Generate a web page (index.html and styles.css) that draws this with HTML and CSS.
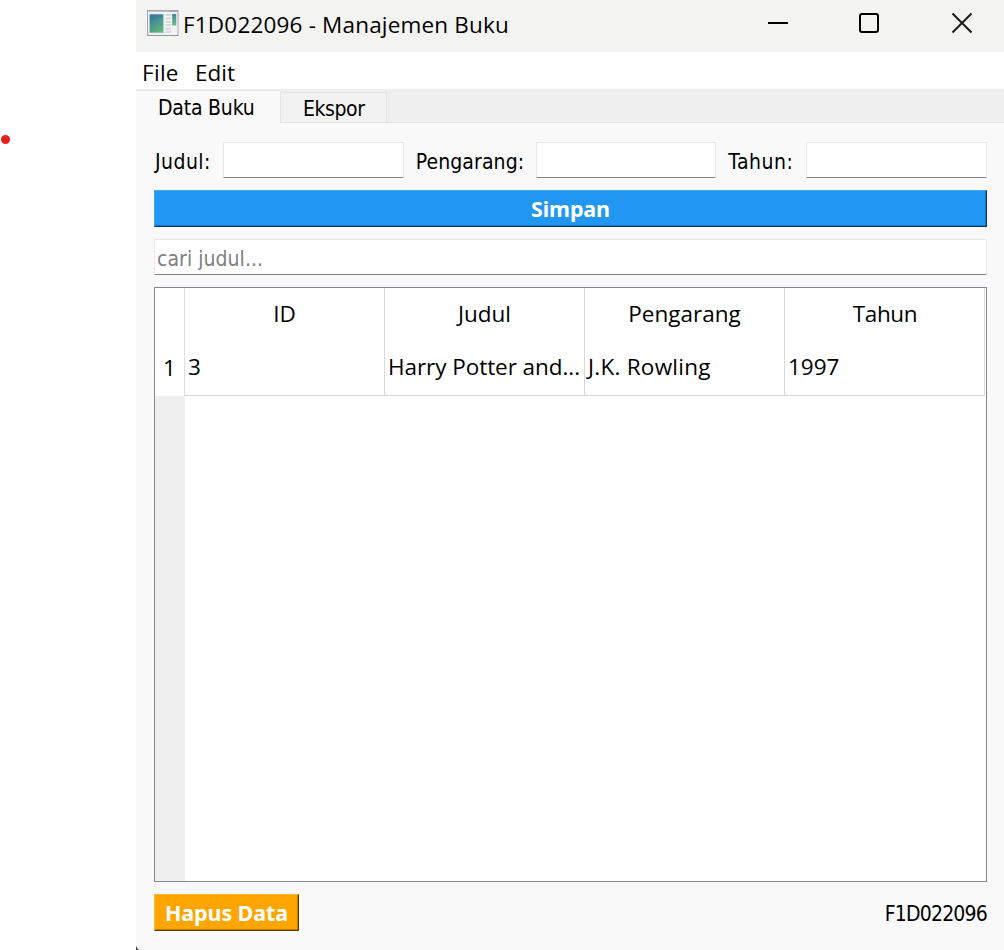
FILE: index.html
```html
<!DOCTYPE html>
<html lang="id">
<head>
<meta charset="utf-8">
<title>F1D022096 - Manajemen Buku</title>
<link rel="stylesheet" href="styles.css">
</head>
<body>
<aside class="margin"><span class="dot"></span></aside>
<main class="window">
  <header class="titlebar">
    <svg class="app-icon" width="32" height="27" viewBox="0 0 32 27">
      <defs>
        <linearGradient id="pane" x1="0" y1="0" x2=".6" y2="1"><stop offset="0" stop-color="#3a76a0"/><stop offset=".5" stop-color="#45948e"/><stop offset="1" stop-color="#62b478"/></linearGradient>
        <linearGradient id="bar" x1="0" y1="0" x2="0" y2="1"><stop offset="0" stop-color="#4085a8"/><stop offset="1" stop-color="#74bd78"/></linearGradient>
      </defs>
      <rect x=".5" y=".5" width="30.500" height="25" fill="#f1f2f4" stroke="#a3a8af"/>
      <path d="M1 1.500h30" stroke="#c1c6cc"/><path d="M22 1h9" stroke="#8f98a2"/>
      <path d="M0 25.500h31.500" stroke="#92979d"/>
      <rect x="2.200" y="4" width="14.600" height="19" fill="url(#pane)" stroke="#d9e4e8" stroke-width=".8"/>
      <path d="M3 10Q9 10 16 6V4.500H3z" fill="#3b709c" opacity=".4"/>
      <path d="M18.500 5h5.500M18.500 8.500h5.500M18.500 12h5.500M18.500 15h5.500M18.500 19h5.500M18.500 22h5.500" stroke="#cfd1d4" stroke-width="1.400"/>
      <rect x="25.200" y="4" width="4" height="11.500" fill="url(#bar)"/>
    </svg>
    <h1 class="title">F1D022096 - Manajemen Buku</h1>
    <svg class="controls" width="206" height="22" viewBox="0 0 206 22" fill="none" stroke="#000">
      <path d="M0 11h20" stroke-width="2"/>
      <rect x="92" y="2" width="18" height="18" rx="2" stroke-width="2"/>
      <path d="M184.500 1.500l19 19M203.500 1.500l-19 19" stroke="#1b1b1b" stroke-width="2"/>
    </svg>
  </header>
  <nav class="menu"><span class="menu-file">File</span><span class="menu-edit">Edit</span></nav>
  <nav class="tabs">
    <span class="tab tab-active">Data Buku</span>
    <span class="tab tab-idle">Ekspor</span>
    <span class="tab-rest"></span>
  </nav>
  <section class="panel">
    <div class="form">
      <label class="l-judul">Judul:</label><span class="input"></span>
      <label class="l-pengarang">Pengarang:</label><span class="input"></span>
      <label class="l-tahun">Tahun:</label><span class="input"></span>
    </div>
    <div class="button save"><span>Simpan</span></div>
    <div class="input search"><span>cari judul...</span></div>
    <div class="table">
      <div class="row head">
        <span class="num"></span><span class="cell">ID</span><span class="cell">Judul</span><span class="cell">Pengarang</span><span class="cell c-year">Tahun</span>
      </div>
      <div class="row data">
        <span class="num">1</span><span class="cell">3</span><span class="cell c-title">Harry Potter and...</span><span class="cell c-author">J.K. Rowling</span><span class="cell">1997</span>
      </div>
      <div class="gutter"></div>
    </div>
    <footer class="footer">
      <div class="button delete"><span>Hapus Data</span></div>
      <span class="nim">F1D022096</span>
    </footer>
  </section>
  <svg class="corner" width="4" height="4" viewBox="0 0 4 4"><path d="M0 0Q1 3 4 4H0z" fill="#444"/></svg>
</main>
</body>
</html>
```
FILE: styles.css
```css
* { box-sizing: border-box; }
body { margin: 0; display: flex; width: 1004px; height: 950px; overflow: hidden; background: #fff; color: #000; font-family: "Open Sans", sans-serif; font-size: 22.5px; line-height: 30px; white-space: nowrap; }
.margin { width: 136px; padding: 135px 0 0 1px; }
.dot { display: block; width: 9px; height: 9px; border-radius: 50%; background: #e81c1c; }
.window { position: relative; width: 868px; height: 950px; display: flex; flex-direction: column; background: #f9f9f9; }
.titlebar { height: 52px; display: flex; align-items: flex-start; background: #f3f3f1; padding: 10px 30px 0 11px; }
.app-icon { margin-right: 4px; }
.title { margin: 0; font-size: 22.5px; font-weight: 400; letter-spacing: 0.18px; }
.controls { margin: 2px 0 0 auto; }
.menu { height: 37px; background: #fff; display: flex; padding: 6px 0 0 6px; gap: 16px; }
.menu-file { width: 37px; letter-spacing: 0.3px; }
.tabs { height: 34px; display: flex; align-items: flex-end; background: #efefef; font-family: "DejaVu Sans Condensed", "DejaVu Sans", sans-serif; font-stretch: condensed; font-size: 21px; }
.tab-active { width: 144px; height: 33px; padding: 2px 0 0 22px; border-top: 1px solid #e5e5e5; background: #f9f9f9; letter-spacing: -0.2px; }
.tab-idle { width: 107px; height: 31px; padding: 2px 0 0 22px; border: 1px solid #e5e5e5; border-top-width: 1px; line-height: 28px; background: #f2f2f2; letter-spacing: -0.4px; }
.tab-rest { flex: 1; height: 34px; border-bottom: 1px solid #e5e5e5; }
.panel { flex: 1; display: flex; flex-direction: column; padding: 19px 17px 18px 18px; font-family: "DejaVu Sans Condensed", "DejaVu Sans", sans-serif; font-stretch: condensed; font-size: 21px; }
.form { display: flex; height: 36px; align-items: center; }
.form label { padding-top: 4px; }
.input { width: 181px; height: 36px; background: #fff; border: 1px solid #e8e8e8; border-bottom-color: #858585; border-radius: 1px; }
.form .l-judul { width: 69px; padding-left: 1px; letter-spacing: 0.45px; }
.form .l-pengarang { width: 132px; padding-left: 12px; letter-spacing: 0.1px; }
.form .l-tahun { width: 90px; padding-left: 12px; letter-spacing: 0.5px; }
.button { height: 37px; color: #fff; font-family: "Noto Sans", sans-serif; font-size: 21.5px; font-stretch: normal; font-weight: 700; border: 1px solid; text-align: center; line-height: 35px; }
.save { margin-top: 12px; background: #2196f3; border-color: #42a7f6 #0c3658 #0c3658 #42a7f6; box-shadow: inset -1px -1px #1976c0; letter-spacing: -0.15px; }
.search { width: 100%; margin-top: 12px; padding-left: 2px; line-height: 38px; color: #808080; letter-spacing: 0.05px; }
.table { height: 595px; margin-top: 12px; display: flex; flex-direction: column; border: 1px solid #828790; background: #fff; font-family: "Open Sans", sans-serif; font-stretch: normal; font-size: 22.5px; }
.row { display: flex; }
.num { width: 30px; border-right: 1px solid #dedede; text-align: center; }
.cell { width: 200px; border-right: 1px solid #d8d8d8; }
.head { height: 49px; text-align: center; line-height: 51px; }
.head .c-year { letter-spacing: -0.4px; padding-left: 1px; }
.data { height: 59px; line-height: 60px; }
.data .num { line-height: 62px; height: 59px; }
.data .cell { padding-left: 3px; border-bottom: 1px solid #d4d4d4; }
.data .c-title { letter-spacing: -0.06px; }
.data .c-author { letter-spacing: 0.25px; }
.gutter { flex: 1; width: 30px; background: #efefef; }
.footer { display: flex; justify-content: space-between; align-items: center; margin-top: 12px; }
.delete { width: 145px; background: #ffa500; border-color: #ffb834 #5b3c06 #5b3c06 #ffb834; box-shadow: inset -1px -1px #bd7b05; letter-spacing: -0.1px; }
.nim { letter-spacing: -0.8px; padding-top: 3px; }
.corner { position: absolute; left: 0; bottom: 0; }
```
